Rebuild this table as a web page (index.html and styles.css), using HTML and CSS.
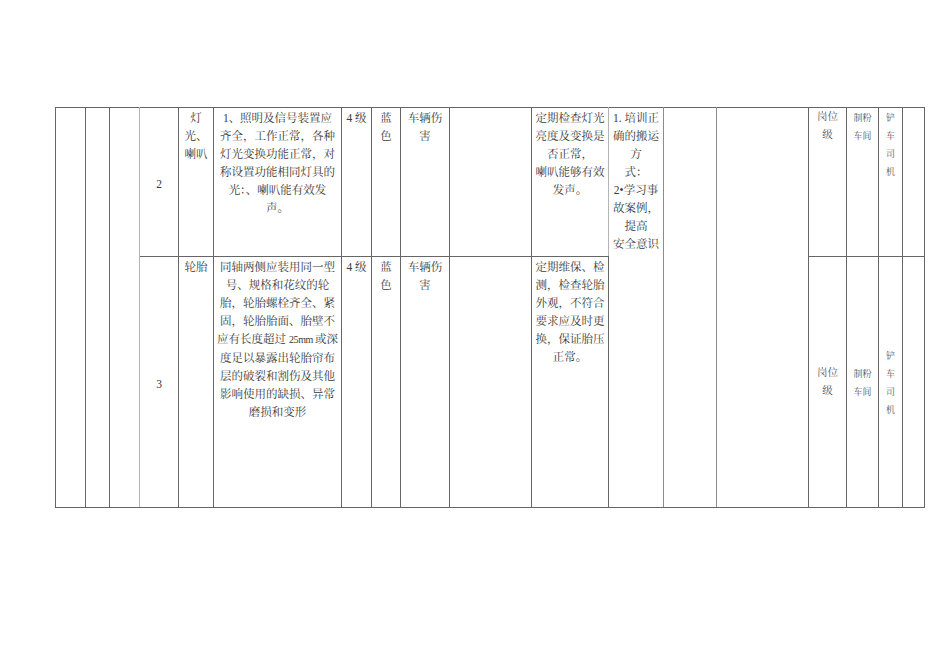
FILE: index.html
```html
<!DOCTYPE html>
<html lang="zh-CN">
<head>
<meta charset="utf-8">
<title>危险源辨识表</title>
<link rel="stylesheet" href="styles.css">
</head>
<body>
<table class="sheet">
  <colgroup>
    <col class="c30"><col class="c24"><col class="c30"><col class="c39"><col class="c35">
    <col class="c128"><col class="c30"><col class="c29"><col class="c49"><col class="c82">
    <col class="c77"><col class="c55"><col class="c53"><col class="c92"><col class="c38">
    <col class="c32"><col class="c24"><col class="c22">
  </colgroup>
  <tr class="row-a">
    <td rowspan="2"></td>
    <td rowspan="2"></td>
    <td rowspan="2" class="soft-right"></td>
    <td class="mid num">2</td>
    <td>灯<br>光、<br>喇叭</td>
    <td>1、照明及信号装置应<br>齐全，工作正常，各种<br>灯光变换功能正常，对<br>称设置功能相同灯具的<br>光：、喇叭能有效发<br>声。</td>
    <td>4 级</td>
    <td>蓝<br>色</td>
    <td>车辆伤<br>害</td>
    <td></td>
    <td class="soft-right">定期检查灯光<br>亮度及变换是<br>否正常，<br>喇叭能够有效<br>发声。</td>
    <td rowspan="2" class="grey-right">1. 培训正<br>确的搬运<br>方<br>式：<br>2•学习事<br>故案例，<br>提高<br>安全意识</td>
    <td rowspan="2" class="grey-right"></td>
    <td rowspan="2"></td>
    <td class="small post">岗位<br>级</td>
    <td class="small">制粉<br>车间</td>
    <td class="small">铲<br>车<br>司<br>机</td>
    <td></td>
  </tr>
  <tr class="row-b">
    <td class="mid num">3</td>
    <td>轮胎</td>
    <td>同轴两侧应装用同一型<br>号、规格和花纹的轮<br>胎，轮胎螺栓齐全、紧<br>固，轮胎胎面、胎壁不<br>应有长度超过<span class="unit">25mm</span>或深<br>度足以暴露出轮胎帘布<br>层的破裂和割伤及其他<br>影响使用的缺损、异常<br>磨损和变形</td>
    <td>4 级</td>
    <td>蓝<br>色</td>
    <td>车辆伤<br>害</td>
    <td></td>
    <td class="soft-right">定期维保、检<br>测，检查轮胎<br>外观，不符合<br>要求应及时更<br>换，保证胎压<br>正常。</td>
    <td class="small post mid">岗位<br>级</td>
    <td class="small mid">制粉<br>车间</td>
    <td class="small mid">铲<br>车<br>司<br>机</td>
    <td></td>
  </tr>
</table>
</body>
</html>
```

FILE: styles.css
```css
html, body {
  margin: 0;
  padding: 0;
  background: #ffffff;
}

body {
  padding: 107px 0 0 55px;
  font-family: "Liberation Serif", "Noto Serif CJK SC", "Noto Sans CJK SC", serif;
}

.sheet {
  border-collapse: collapse;
  table-layout: fixed;
  width: 870px;
}

.c22 { width: 22px; }
.c24 { width: 24px; }
.c29 { width: 29px; }
.c30 { width: 30px; }
.c32 { width: 32px; }
.c35 { width: 35px; }
.c38 { width: 38px; }
.c39 { width: 39px; }
.c49 { width: 49px; }
.c53 { width: 53px; }
.c55 { width: 55px; }
.c77 { width: 77px; }
.c82 { width: 82px; }
.c92 { width: 92px; }
.c128 { width: 128px; }

.row-a { height: 149px; }
.row-b { height: 251px; }

.sheet td {
  border: 1px solid #666666;
  padding: 1px 0 0 0;
  vertical-align: top;
  text-align: center;
  white-space: nowrap;
  font-size: 11.5px;
  line-height: 18px;
  color: #3a3a3a;
}

.sheet td.soft-right { border-right-color: #b4b4b4; }
.sheet td.grey-right { border-right-color: #8c8c8c; }

.sheet td.mid { vertical-align: middle; }

.sheet td.num { padding-top: 4px; }

.sheet td.small {
  font-size: 9px;
  color: #555555;
}

.sheet td.post {
  font-size: 10.5px;
  padding-top: 0;
}

.unit {
  font-size: 10px;
  letter-spacing: -0.4px;
  margin: 0 2px 0 3px;
}
```
